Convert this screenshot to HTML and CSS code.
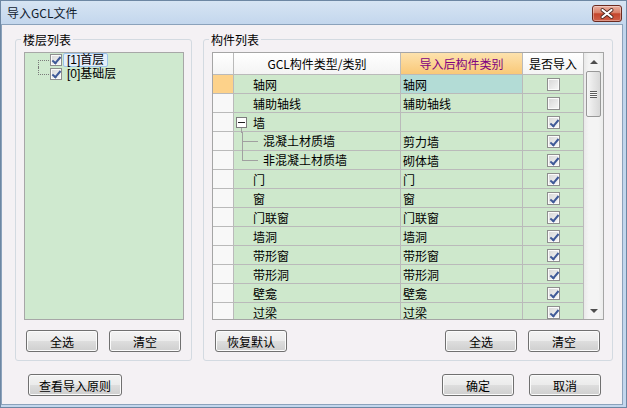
FILE: index.html
```html
<!DOCTYPE html>
<html lang="zh-CN">

<head>
    <meta charset="UTF-8">
    <meta name="viewport" content="width=device-width, initial-scale=1.0">
    <title>导入GCL文件</title>
    <link rel="stylesheet" href="styles.css">
</head>

<body>

    <div class="window">
        <div class="titlebar">
            <span class="title">导入GCL文件</span>
            <div class="close-btn">
                <svg width="14" height="11" viewBox="0 0 14 11">
                    <path d="M2.5 2 L11.5 9 M11.5 2 L2.5 9" stroke="#4a2620" stroke-width="3.8" stroke-linecap="round" />
                    <path d="M2.5 2 L11.5 9 M11.5 2 L2.5 9" stroke="#ffffff" stroke-width="2.2" stroke-linecap="round" />
                </svg>
            </div>
        </div>

        <div class="client">
            <div class="groups">
                <fieldset class="group floors">
                    <legend>楼层列表</legend>
                    <div class="tree">
                        <div class="tree-item first">
                            <span class="elbow"></span>
                            <span class="chk on"></span>
                            <span class="tree-label selected">[1]首层</span>
                        </div>
                        <div class="tree-item last">
                            <span class="elbow"></span>
                            <span class="chk on"></span>
                            <span class="tree-label">[0]基础层</span>
                        </div>
                    </div>
                    <div class="btn-row">
                        <button class="btn">全选</button>
                        <button class="btn">清空</button>
                    </div>
                </fieldset>

                <fieldset class="group parts">
                    <legend>构件列表</legend>
                    <div class="grid">
                        <div class="sheet">
                            <div class="cell rh head"></div>
                            <div class="cell head">GCL构件类型/类别</div>
                            <div class="cell head orange">导入后构件类别</div>
                            <div class="cell head">是否导入</div>

                            <div class="cell rh current"></div>
                            <div class="cell name">轴网</div>
                            <div class="cell target selected">轴网</div>
                            <div class="cell flag"><span class="chk"></span></div>

                            <div class="cell rh"></div>
                            <div class="cell name">辅助轴线</div>
                            <div class="cell target">辅助轴线</div>
                            <div class="cell flag"><span class="chk"></span></div>

                            <div class="cell rh"></div>
                            <div class="cell name parent"><span class="expander"></span>墙</div>
                            <div class="cell target"></div>
                            <div class="cell flag"><span class="chk on"></span></div>

                            <div class="cell rh"></div>
                            <div class="cell name child"><span class="branch"></span>混凝土材质墙</div>
                            <div class="cell target">剪力墙</div>
                            <div class="cell flag"><span class="chk on"></span></div>

                            <div class="cell rh"></div>
                            <div class="cell name child last"><span class="branch"></span>非混凝土材质墙</div>
                            <div class="cell target">砌体墙</div>
                            <div class="cell flag"><span class="chk on"></span></div>

                            <div class="cell rh"></div>
                            <div class="cell name">门</div>
                            <div class="cell target">门</div>
                            <div class="cell flag"><span class="chk on"></span></div>

                            <div class="cell rh"></div>
                            <div class="cell name">窗</div>
                            <div class="cell target">窗</div>
                            <div class="cell flag"><span class="chk on"></span></div>

                            <div class="cell rh"></div>
                            <div class="cell name">门联窗</div>
                            <div class="cell target">门联窗</div>
                            <div class="cell flag"><span class="chk on"></span></div>

                            <div class="cell rh"></div>
                            <div class="cell name">墙洞</div>
                            <div class="cell target">墙洞</div>
                            <div class="cell flag"><span class="chk on"></span></div>

                            <div class="cell rh"></div>
                            <div class="cell name">带形窗</div>
                            <div class="cell target">带形窗</div>
                            <div class="cell flag"><span class="chk on"></span></div>

                            <div class="cell rh"></div>
                            <div class="cell name">带形洞</div>
                            <div class="cell target">带形洞</div>
                            <div class="cell flag"><span class="chk on"></span></div>

                            <div class="cell rh"></div>
                            <div class="cell name">壁龛</div>
                            <div class="cell target">壁龛</div>
                            <div class="cell flag"><span class="chk on"></span></div>

                            <div class="cell rh"></div>
                            <div class="cell name">过梁</div>
                            <div class="cell target">过梁</div>
                            <div class="cell flag"><span class="chk on"></span></div>
                        </div>

                        <div class="vscroll">
                            <div class="sb-btn"><span class="arrow up"></span></div>
                            <div class="sb-thumb"><span class="grip"></span></div>
                            <div class="sb-track"></div>
                            <div class="sb-btn"><span class="arrow down"></span></div>
                        </div>
                    </div>
                    <div class="btn-row">
                        <button class="btn">恢复默认</button>
                        <button class="btn push">全选</button>
                        <button class="btn">清空</button>
                    </div>
                </fieldset>
            </div>

            <div class="footer">
                <button class="btn wide">查看导入原则</button>
                <button class="btn push">确定</button>
                <button class="btn">取消</button>
            </div>
        </div>
    </div>

</body>

</html>
```

FILE: styles.css
```css
* {
    box-sizing: border-box;
}

body {
    margin: 0;
    font-family: "Noto Sans CJK SC", "Liberation Sans", sans-serif;
    font-size: 12px;
    color: #000;
}

.window {
    width: 627px;
    height: 408px;
    border: 1px solid #6d87a3;
    padding: 0 4px 3px 1px;
    background: linear-gradient(#d6e4f3, #c1d5ec 26px, #c3d7ed);
    display: flex;
    flex-direction: column;
}

.titlebar {
    height: 24px;
    flex: none;
    display: flex;
    align-items: center;
    justify-content: space-between;
    padding-left: 5px;
}

.title {
    color: #10202e;
    line-height: 16px;
}

.close-btn {
    width: 30px;
    height: 17px;
    border: 1px solid #6c2a20;
    border-radius: 3px;
    background: linear-gradient(#eab0a2, #d98068 45%, #c4452c 52%, #cf6049);
    box-shadow: inset 0 0 0 1px rgba(255, 255, 255, 0.35);
    display: flex;
    justify-content: center;
    align-items: center;
}

.client {
    flex: 1;
    background-color: #f4f1f4;
    box-shadow: 0 0 0 1px #8ba2bb;
    padding: 7px 9px 8px 13px;
    display: flex;
    flex-direction: column;
}

.groups {
    display: flex;
    gap: 11px;
}

.group {
    margin: 0;
    padding: 5px 7px 8px 8px;
    border: 1px solid #d3dae1;
    border-radius: 3px;
    min-width: 0;
}

.group legend {
    margin-left: -3px;
    padding: 0 2px;
    line-height: 15px;
}

.floors {
    width: 177px;
}

.parts {
    width: 410px;
    padding-right: 8px;
}

/* floor tree */

.tree {
    width: 160px;
    height: 268px;
    border: 1px solid #a7a7a7;
    background-color: #cfe9cf;
}

.tree-item {
    height: 14px;
    display: flex;
    align-items: center;
    padding-left: 13px;
}

.elbow {
    width: 12px;
    align-self: stretch;
    position: relative;
}

.elbow::before {
    content: "";
    position: absolute;
    left: 0;
    top: 7px;
    width: 11px;
    border-top: 1px dotted #7a7a7a;
}

.elbow::after {
    content: "";
    position: absolute;
    left: 0;
    border-left: 1px dotted #7a7a7a;
}

.first .elbow::after {
    top: 7px;
    bottom: 0;
}

.last .elbow::after {
    top: 0;
    height: 8px;
}

.tree-label {
    margin-left: 1px;
    padding: 0 3px;
    font-family: "Liberation Sans", "Noto Sans CJK SC", sans-serif;
    line-height: 12px;
    border: 1px solid transparent;
}

.tree-label.selected {
    border-color: #9cc3ea;
    border-radius: 2px;
    background-color: #e4eef9;
}

/* check boxes */

.chk {
    width: 12px;
    height: 12px;
    flex: none;
    border: 1px solid #8e8e8e;
    background: linear-gradient(135deg, #d6d6d6, #f8f8f8);
    box-shadow: inset 0 0 0 1px #fbfbfb;
    position: relative;
}

.chk.on::after {
    content: "";
    position: absolute;
    left: 3px;
    top: 0px;
    width: 3px;
    height: 7px;
    border: solid #3f5a98;
    border-width: 0 2px 2px 0;
    transform: rotate(40deg);
}

.flag .chk {
    width: 13px;
    height: 13px;
}

.flag .chk.on::after {
    left: 4px;
    top: 1px;
}

/* component grid */

.grid {
    width: 392px;
    height: 268px;
    border: 1px solid #a5a5a5;
    display: flex;
    overflow: hidden;
}

.sheet {
    flex: none;
    width: 371px;
    display: grid;
    grid-template-columns: 21px 167px 122px 61px;
    grid-template-rows: 22px;
    grid-auto-rows: 19px;
}

.cell {
    border-right: 1px solid #bababa;
    border-bottom: 1px solid #bababa;
    background-color: #cee8cc;
    display: flex;
    align-items: center;
    white-space: nowrap;
}

.cell.head {
    background: linear-gradient(#ffffff, #f4f4f4);
    justify-content: center;
}

.cell.head.orange {
    background: linear-gradient(#fde2ad, #f9c878);
    color: #800080;
}

.cell.rh {
    background-color: #f8f8f8;
}

.cell.rh.head {
    background: linear-gradient(#ffffff, #f4f4f4);
}

.cell.rh.current {
    background-color: #fdd28a;
}

.name {
    padding-left: 19px;
}

.target {
    padding-left: 2px;
}

.target.selected {
    background-color: #b3dcd6;
}

.flag {
    justify-content: center;
}

.name.parent {
    padding-left: 2px;
}

.expander {
    width: 11px;
    height: 11px;
    margin-right: 6px;
    border: 1px solid #7c7c7c;
    background-color: #fff;
    position: relative;
}

.expander::before {
    content: "";
    position: absolute;
    left: 1px;
    top: 4px;
    width: 7px;
    border-top: 1px solid #222;
}

.expander::after {
    content: "";
    position: absolute;
    left: 4px;
    top: 10px;
    height: 5px;
    border-left: 1px solid #a0a0a0;
}

.name.child {
    padding-left: 8px;
    align-items: stretch;
    line-height: 18px;
}

.branch {
    width: 16px;
    margin-right: 5px;
    position: relative;
}

.branch::before {
    content: "";
    position: absolute;
    left: 0;
    top: 0;
    bottom: -1px;
    border-left: 1px solid #a0a0a0;
}

.child.last .branch::before {
    bottom: 9px;
}

.branch::after {
    content: "";
    position: absolute;
    left: 0;
    top: 9px;
    width: 16px;
    border-top: 1px solid #a0a0a0;
}

/* scroll bar */

.vscroll {
    width: 19px;
    display: flex;
    flex-direction: column;
    background: linear-gradient(to right, #e9e9e9, #f4f4f4 25%, #f4f4f4 75%, #ececec);
}

.sb-btn {
    height: 17px;
    flex: none;
    display: flex;
    justify-content: center;
    align-items: center;
}

.arrow {
    width: 0;
    height: 0;
    border-left: 4px solid transparent;
    border-right: 4px solid transparent;
}

.arrow.up {
    border-bottom: 4px solid #4e4e4e;
}

.arrow.down {
    border-top: 4px solid #4e4e4e;
}

.sb-thumb {
    height: 46px;
    margin: 1px 2px 0 2px;
    flex: none;
    border: 1px solid #989898;
    border-radius: 2px;
    background: linear-gradient(to right, #f6f6f6, #e6e6e6 50%, #d8d8d8);
    display: flex;
    justify-content: center;
    align-items: center;
}

.grip {
    width: 7px;
    height: 7px;
    background: repeating-linear-gradient(#5c5c5c 0 1px, #fafafa 1px 2px);
}

.sb-track {
    flex: 1;
}

/* buttons */

.btn-row {
    display: flex;
    gap: 11px;
    margin-top: 10px;
    padding-left: 2px;
}

.parts .btn-row {
    padding-left: 3px;
    padding-right: 4px;
}

.btn {
    width: 72px;
    height: 22px;
    margin: 0;
    padding: 0;
    font: inherit;
    color: #000;
    border: 1px solid #707070;
    border-radius: 3px;
    background: linear-gradient(#f3f3f3, #ebebeb 50%, #dddddd 52%, #cfcfcf);
    box-shadow: inset 0 0 0 1px #fbfbfb;
}

.btn.push {
    margin-left: auto;
}

.btn.wide {
    width: 94px;
}

.footer {
    display: flex;
    gap: 15px;
    margin-top: 13px;
    padding: 0 12px 0 13px;
}
```
